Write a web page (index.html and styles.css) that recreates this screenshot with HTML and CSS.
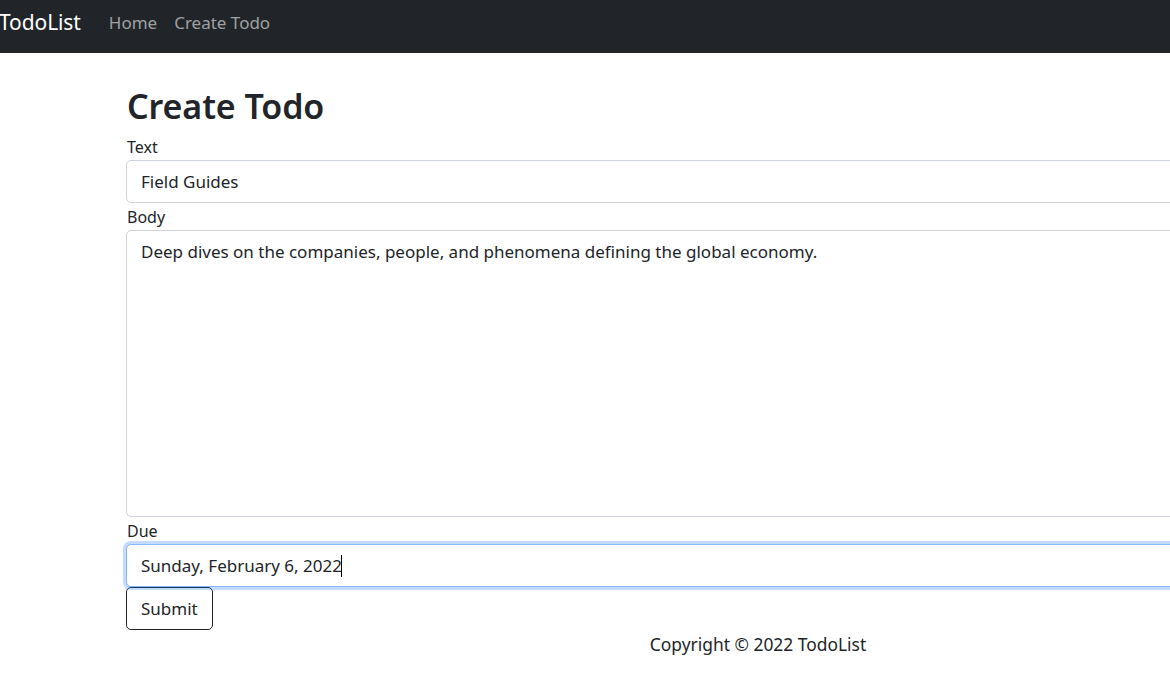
FILE: index.html
```html
<!DOCTYPE html>
<html lang="en">
<head>
<meta charset="utf-8">
<title>Create Todo - TodoList</title>
<link rel="stylesheet" href="styles.css">
</head>
<body>
<div class="page">
  <nav class="navbar">
    <a class="brand" href="#">TodoList</a>
    <ul class="nav">
      <li><a href="#">Home</a></li>
      <li><a href="#">Create Todo</a></li>
    </ul>
  </nav>
  <main class="container">
    <h1 class="title">Create Todo</h1>
    <form class="form">
      <label class="label" for="text">Text</label>
      <input class="control" id="text" type="text" value="Field Guides">
      <label class="label" for="body">Body</label>
      <textarea class="control area" id="body">Deep dives on the companies, people, and phenomena defining the global economy.</textarea>
      <label class="label" for="due">Due</label>
      <div class="due-wrap">
        <input class="control focused" id="due" type="text" value="Sunday, February 6, 2022">
        <span class="caret"></span>
      </div>
      <div class="actions"><button class="btn" type="button">Submit</button></div>
    </form>
  </main>
  <footer class="footer">Copyright © 2022 TodoList</footer>
</div>
</body>
</html>
```
FILE: styles.css
```css
html, body {
  margin: 0;
  padding: 0;
  background: #fff;
  overflow: hidden;
}
body {
  font-family: "Noto Sans", "Open Sans", "DejaVu Sans", sans-serif;
  font-size: 17px;
  color: #212529;
}
.page {
  width: 1516px;
}
.navbar {
  height: 53px;
  background: #212529;
  display: flex;
  align-items: center;
  box-sizing: border-box;
  padding-bottom: 9px;
}
.brand {
  color: #fff;
  text-decoration: none;
  font-size: 21px;
  margin-left: -1px;
  margin-right: 28px;
  letter-spacing: -0.1px;
}
.nav {
  list-style: none;
  margin: 0;
  padding: 0;
  display: flex;
  gap: 17px;
}
.nav a {
  color: rgba(255,255,255,0.58);
  text-decoration: none;
  font-size: 17px;
}
.container {
  padding: 0 127px 0 126px;
}
.title {
  margin: 0 0 6px 1px;
  padding-top: 32px;
  font-size: 34px;
  font-weight: 600;
  line-height: 42px;
  letter-spacing: -0.1px;
}
.form {
  display: flex;
  flex-direction: column;
}
.label {
  display: block;
  font-size: 16px;
  line-height: 20px;
  margin: 4px 0 3px 1px;
}
.control {
  display: block;
  box-sizing: border-box;
  width: 100%;
  height: 43px;
  padding: 0 14px;
  font-family: inherit;
  font-size: 17px;
  color: #212529;
  border: 1px solid #ced4da;
  border-radius: 5px;
  background: #fff;
  outline: none;
}
.area {
  height: 287px;
  padding-top: 9px;
  resize: none;
  line-height: 24px;
}
.due-wrap {
  position: relative;
}
.focused {
  border-color: #86b7fe;
  box-shadow: 0 0 0 3px rgba(13,110,253,0.25);
}
.caret {
  position: absolute;
  left: 215px;
  top: 11px;
  width: 1px;
  height: 22px;
  background: #000;
}
.actions {
  margin-top: 0;
}
.btn {
  box-sizing: border-box;
  height: 43px;
  padding: 0 14px;
  font-family: inherit;
  font-size: 17px;
  color: #212529;
  background: #fff;
  border: 1px solid #212529;
  border-radius: 5px;
}
.footer {
  text-align: center;
  padding-top: 3px;
  font-size: 17.4px;
  line-height: 22px;
}
```
